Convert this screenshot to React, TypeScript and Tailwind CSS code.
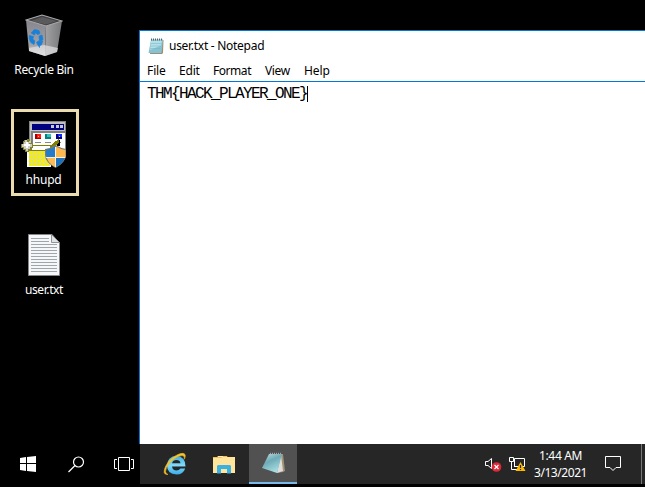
import type { ReactNode } from "react";

function RecycleBin() {
  return (
    <svg width="38" height="43" viewBox="0 0 38 43">
      <defs>
        <linearGradient id="binL" x1="0" y1="0" x2="0" y2="1">
          <stop offset="0" stopColor="#85858b" />
          <stop offset=".7" stopColor="#a3a2a8" />
          <stop offset="1" stopColor="#dedee0" />
        </linearGradient>
        <linearGradient id="binR" x1="0" y1="0" x2="1" y2="0">
          <stop offset="0" stopColor="#a3a3a6" />
          <stop offset="1" stopColor="#77787a" />
        </linearGradient>
      </defs>
      <path d="M1 6 17 1 37 7 21 12Z" fill="#3f3e40" />
      <path d="M6 7 17 3 32 7 21 10.5Z" fill="#5a595c" />
      <path d="M1 6 21 12 20 42 4 37Z" fill="url(#binL)" />
      <path d="M21 12 37 7 32 38 20 42Z" fill="url(#binR)" />
      <path d="M4 34 19 31 33 34 32 38 20 42 4 37Z" fill="#e1e1e2" opacity=".7" />
      <path d="M1 6 17 1 37 7 21 12Z" fill="none" stroke="#a9aaab" strokeWidth="1.1" />
      <g fill="#1681da" stroke="#1681da" strokeWidth=".7" strokeLinejoin="round">
        <path d="M6.2 19 9.5 15.5 14 16.5 15 19.5 12.5 20.5 10.5 18.5 9.5 21Z" />
        <path d="M4.2 21.5 8.5 22.5 7.8 25 9.8 27 9 30.5 5.8 28.5 4.2 25Z" />
        <path d="M14.2 22 17 21 18 25.5 15.5 27.5 14.2 25ZM11.5 28.5 14.5 26.3V28.3L17.8 27 16.2 31 14.5 31.5V33.5Z" />
      </g>
    </svg>
  );
}

function HelpUpdater() {
  return (
    <svg width="46" height="48" viewBox="0 0 46 48" shapeRendering="crispEdges">
      <defs>
        <pattern id="checker" width="4" height="4" patternUnits="userSpaceOnUse">
          <path d="M0 0h4v4H0Z" fill="#d8d8a8" />
          <path d="M0 0h3v2H0ZM2 2h2v2H2Z" fill="#f6f000" />
        </pattern>
      </defs>
      <path d="M8 1H45V38H8Z" fill="#858585" />
      <path d="M9 2H44V37H9Z" fill="#c0c0c0" />
      <path d="M11 4H43V10H11Z" fill="#000080" />
      <path d="M10 11H44V35H10Z" fill="#808080" />
      <path d="M12 13H44V35H12Z" fill="#fff" />
      <path d="M30 5h3v3h-3zM35 5h3v3h-3zM39 5h3v3h-3z" fill="#c8c8c8" />
      <path d="M14 14h6v5h-6z" fill="#a00000" />
      <path d="M16 14h4v4h-4z" fill="#ff1818" />
      <path d="M24 14h6v5h-6z" fill="#008080" />
      <path d="M26 14h4v3h-4z" fill="#30c0b8" />
      <path d="M35 14h6v5h-6z" fill="#000090" />
      <path d="M37 14h4v3h-4z" fill="#1028ff" />
      <path d="M17 16h1v1h-1zM38 16h1v1h-1z" fill="#ffe500" />
      <path d="M14 22.5h6M24 22.5h6M35 22.5h5" stroke="#888" />
      <path d="M36 20h3v6h-3z" fill="#000" />
      <path d="M10 25h20l5-4 3-3v4l-5 5-3 4H8Z" fill="#808000" />
      <path d="M11 26h18v4H9Z" fill="#fff" />
      <path d="M6 31h24v16H6Z" fill="#fff" />
      <path d="M8 31h21v15H8Z" fill="url(#checker)" />
      <path d="M3 20h3v-1h3v2h2v3h1v4h-1v2H8v2H4v-2H2v-2H0v-4h2v-3h1Z" fill="#808030" />
      <path d="M4 20h2v2h2v-1h2v2H8v1h3v3H9v2H7v2H5v-2H3v-2H1v-3h2v-2h1Z" fill="#d0d0c0" />
      <path d="M5 22h2v2h2v2H7v2H5v-2H3v-2h2Z" fill="#fff" />
      <g shapeRendering="auto">
        <path d="M24 29q6-1 10.5-4 5 3 10.5 4v6q-.5 8-10.5 13Q24.5 43 24 35Z" fill="#77797a" />
        <path d="M25 30q5-1 9-3.5V37h-8.5Q25 34 25 30Z" fill="#247bc8" />
        <path d="M35 26.5q4 2.5 9.5 3.5v7H35Z" fill="#ffb84d" />
        <path d="M25.8 38H34v9q-6-3-8.2-9Z" fill="#ffbc56" />
        <path d="M35 38h8.8Q41 44 35 47Z" fill="#1872c0" />
        <path d="M34.5 27v20M25 37.5h19" stroke="#f8f1d7" />
      </g>
    </svg>
  );
}

function TextFile() {
  return (
    <svg width="32" height="42" viewBox="0 0 32 42">
      <path d="M.5.5H24L31.5 9V41.5H.5Z" fill="#f6f7f8" stroke="#848689" />
      <path d="M23.5.5V8.5H31.5Z" fill="#dfe1e3" stroke="#919497" />
      <path d="M3 4.5h18M3 7.5h18M3 10.5h26M3 13.5h26M3 16.5h26M3 19.5h26M3 22.5h26M3 25.5h26M3 28.5h26M3 31.5h26M3 34.5h26M3 37.5h26" stroke="#a0a5aa" />
    </svg>
  );
}

function NotepadSmall() {
  return (
    <svg width="16" height="17" viewBox="0 0 16 17">
      <path d="M4 2h11.5L15 15l-1 1H2Z" fill="#a18e70" />
      <path d="M3 1.5h12L13.5 15H.5Z" fill="#86c2d1" />
      <path d="m3 3 11-.5-1 5L2 12Z" fill="#b4e0e9" />
      <path d="M2.7 5.5h10.5M2.4 8h10.4M2 10.5h10.5" stroke="#75b1bf" strokeWidth=".5" />
      <path d="M3 1.5h12" stroke="#56676b" strokeWidth="2" strokeDasharray="1 1" />
    </svg>
  );
}

function InternetExplorer() {
  return (
    <svg width="24" height="24" viewBox="0 0 24 24">
      <defs>
        <linearGradient id="ieBlue" x1="0" y1="0" x2="0" y2="1">
          <stop offset="0" stopColor="#3aaee6" />
          <stop offset=".5" stopColor="#83daf9" />
          <stop offset="1" stopColor="#37ade9" />
        </linearGradient>
      </defs>
      <path d="M22.5 14.5H9q.5 4 4.5 4 2.5 0 4-2h4.7q-2 6-8.7 6Q4 22 4 13.5 4.500 4 13.500 4q9 .5 9 10.500ZM9 11.200h8.500Q17 8 13.500 8 10 8 9 11.200Z" fill="url(#ieBlue)" />
      <path d="M5 22.500Q-1.200 23 2.500 14.500 6.500 6.500 14.500 2.700 21.500-.200 22.200 3.200 22.500 5 21.400 7.200 22 3.500 19 3.500 13.500 4 8 9.500 2.500 15 2.500 19.500 2.600 21.800 5 22.500Z" fill="#f6c82d" stroke="#eab928" strokeWidth=".6" />
    </svg>
  );
}

function Folder() {
  return (
    <svg width="22" height="19" viewBox="0 0 22 19">
      <path d="M0 2h4l1-1h9l1 2h7v15H0Z" fill="#f2bd55" />
      <path d="M0 3h8l2-1h12v16H0Z" fill="#fee59b" />
      <path d="M5 1h5v1H5Z" fill="#f9edc5" />
      <path d="M4 18.500V11l1-1h12l1 1v7.500h-4V14H8v4.500Z" fill="#3bb0e2" />
    </svg>
  );
}

function NotepadLarge() {
  return (
    <svg width="23" height="22" viewBox="0 0 23 22">
      <defs>
        <linearGradient id="page" x1="0" y1="0" x2=".5" y2="1">
          <stop offset="0" stopColor="#c4dfe4" />
          <stop offset=".45" stopColor="#6eabb6" />
          <stop offset="1" stopColor="#a7dce2" />
        </linearGradient>
      </defs>
      <path d="m19 2 2 0 2 17-2 1-6 1Z" fill="#a09278" />
      <path d="m19 3 2 16-6 2Z" fill="#dededa" />
      <path d="M7 2 20 2 15 21 0 16Z" fill="url(#page)" />
      <path d="M8 1.500 20 1.500" stroke="#9eabad" strokeWidth="1.500" strokeDasharray="1 1" />
    </svg>
  );
}

function DesktopLabel({ children, track }: { children: ReactNode; track: string }) {
  return <span className={`block whitespace-nowrap text-[12px] leading-4 text-white ${track}`}>{children}</span>;
}

function Notepad() {
  return (
    <section className="mt-[30px] flex min-w-0 flex-1 flex-col border-l border-t border-[#0078d7] bg-white text-black">
      <header className="flex h-[30px] shrink-0 items-center pl-2 text-[12px]">
        <NotepadSmall />
        <span className="ml-[5px] tracking-[-0.28px]">user.txt - Notepad</span>
      </header>
      <nav className="flex h-5 shrink-0 items-center text-[12px]">
        <span className="ml-[7px] w-8 tracking-[-0.1px]">File</span>
        <span className="w-[34px] tracking-[-0.2px]">Edit</span>
        <span className="w-[52px] tracking-[-0.45px]">Format</span>
        <span className="w-[39px] tracking-[-0.35px]">View</span>
        <span className="tracking-[-0.1px]">Help</span>
      </nav>
      <div className="h-px shrink-0 bg-[#0078d7]" />
      <main className="flex flex-1 items-start pl-[7px] pt-[3px]">
        <span className="font-['Liberation_Mono',monospace] text-[16px] leading-[18px] tracking-[-1.6px]">THM{"{"}HACK_PLAYER_ONE{"}"}</span>
        <span className="mt-px h-4 w-px bg-black" />
      </main>
    </section>
  );
}

function Taskbar() {
  return (
    <footer className="flex h-10 shrink-0">
      <div className="flex w-[140px] shrink-0 items-center bg-black pl-5 text-white">
        <svg width="16" height="16" viewBox="0 0 16 16" fill="white">
          <path d="M0 2 6 1v6H0ZM7 1l9-1v7H7ZM0 8h6v7L0 14ZM7 8h9v8l-9-1Z" />
        </svg>
        <svg className="ml-8" width="17" height="17" viewBox="0 0 17 17" fill="none" stroke="white" strokeWidth="1.2">
          <circle cx="10.5" cy="6" r="5" />
          <path d="M7 9.500.5 16" />
        </svg>
        <svg className="ml-[29px]" width="20" height="14" viewBox="0 0 20 14" fill="none" stroke="white">
          <path d="M4.5.5h11v13h-11ZM3 2.5H.5v9H3M17 2.5h2.5v9H17" />
        </svg>
      </div>
      <div className="flex min-w-0 flex-1 items-center bg-[#262626] text-white">
        <div className="flex h-10 w-[109px] items-center pl-[23px]">
          <InternetExplorer />
          <div className="ml-[26px]"><Folder /></div>
        </div>
        <div className="flex h-10 w-12 items-center justify-center border-b-2 border-[#76b9ed] bg-[#515151]">
          <NotepadLarge />
        </div>
        <svg className="ml-[188px]" width="17" height="16" viewBox="0 0 17 16">
          <path d="M.5 5.500H3L6.500 2.500v10L3 9.500H.5Z" fill="none" stroke="white" />
          <circle cx="11.500" cy="11" r="4.800" fill="#e02936" />
          <path d="m9.500 9 4 4m0-4-4 4" stroke="white" strokeWidth="1.2" />
        </svg>
        <svg className="ml-[7px]" width="17" height="16" viewBox="0 0 17 16">
          <path d="M5.500 2.500h10v8h-10ZM.5 1.500h4v4h-4ZM2.500 5v8.500H9M5 10.500h3" fill="#262626" stroke="white" />
          <path d="M11.500 6 16.500 15h-10Z" fill="#ffb900" />
          <path d="M11.500 9v3m0 1v1" stroke="#282828" strokeWidth="1.2" />
        </svg>
        <div className="ml-[5px] flex w-[59px] flex-col items-center whitespace-nowrap text-[12px] leading-[17px]">
          <span className="tracking-[-0.35px]">1:44 AM</span>
          <span className="tracking-[-0.45px]">3/13/2021</span>
        </div>
        <svg className="ml-[15px]" width="17" height="16" viewBox="0 0 17 16" fill="none" stroke="white">
          <path d="M.5.5h15v11H11l-3 3-3-3H.5Z" />
        </svg>
        <div className="ml-auto h-10 w-1 border-l border-[#777]" />
      </div>
    </footer>
  );
}

export default function App() {
  return (
    <div className="flex h-[487px] w-[645px] flex-col overflow-hidden bg-black pb-[3px] font-['Noto_Sans',sans-serif]">
      <div className="flex min-h-0 flex-1">
        <aside className="flex w-[139px] shrink-0 flex-col pl-[11px] pt-[14px]">
          <div className="flex h-[95px] w-[66px] flex-col items-center">
            <RecycleBin />
            <div className="mt-[5px]"><DesktopLabel track="tracking-[-0.35px]">Recycle Bin</DesktopLabel></div>
          </div>
          <div className="flex h-[87px] w-[68px] flex-col items-center border-[3px] border-[#eadcae] pt-2 pr-[3px]">
            <div className="h-12 w-[46px]"><HelpUpdater /></div>
            <div className="mt-[4px]"><DesktopLabel track="tracking-[-0.2px]">hhupd</DesktopLabel></div>
          </div>
          <div className="flex w-[66px] flex-col items-center pt-[38px]">
            <TextFile />
            <div className="mt-[6px]"><DesktopLabel track="tracking-[-0.4px]">user.txt</DesktopLabel></div>
          </div>
        </aside>
        <Notepad />
      </div>
      <Taskbar />
    </div>
  );
}
